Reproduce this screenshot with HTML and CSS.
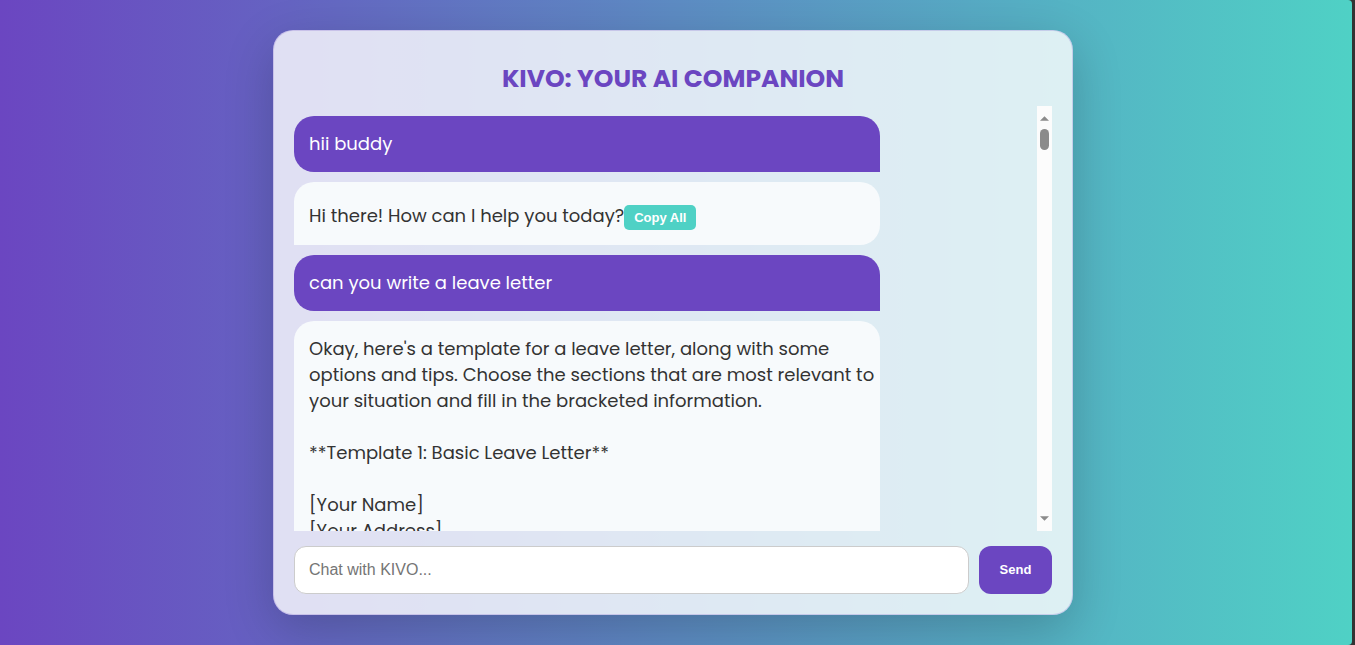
FILE: index.html
```html
<!DOCTYPE html>
<html lang="en">
<head>
<meta charset="utf-8">
<meta name="viewport" content="width=device-width, initial-scale=1">
<title>KIVO: Your AI Companion</title>
<link rel="stylesheet" href="styles.css">
</head>
<body class="page">
<main class="card">
  <h1 class="title">KIVO: YOUR AI COMPANION</h1>
  <div class="chat">
    <section class="messages" aria-label="Conversation">
      <div class="message user">hii buddy</div>
      <div class="message bot">Hi there! How can I help you today?<button class="copy" type="button">Copy All</button></div>
      <div class="message user">can you write a leave letter</div>
      <div class="message bot">Okay, here's a template for a leave letter, along with some options and tips. Choose the sections that are most relevant to your situation and fill in the bracketed information.

**Template 1: Basic Leave Letter**

[Your Name]
[Your Address]</div>
    </section>
    <div class="scrollbar" aria-hidden="true">
      <svg class="arrow" viewBox="0 0 10 5"><path d="M0 5 5 0 10 5z"/></svg>
      <span class="thumb"></span>
      <svg class="arrow down" viewBox="0 0 10 5"><path d="M0 0 5 5 10 0z"/></svg>
    </div>
  </div>
  <form class="composer">
    <input class="field" type="text" placeholder="Chat with KIVO..." aria-label="Chat with KIVO">
    <button class="send" type="button">Send</button>
  </form>
</main>
</body>
</html>
```

FILE: styles.css
```css
* { box-sizing: border-box; }

html { background: #333; }

.page {
  display: flex;
  justify-content: center;
  height: 100vh;
  margin: 0 3px 0 0;
  padding: 30px 6px 30px 0;
  border-radius: 0 4px 4px 0;
  background: linear-gradient(90deg, #6b46c1, #4fd1c5);
  font-family: Poppins, Inter, "Liberation Sans", sans-serif;
}

.card {
  display: flex;
  flex-direction: column;
  width: 100%;
  max-width: 800px;
  padding: 20px;
  border: 1px solid rgba(107, 70, 193, 0.2);
  border-radius: 20px;
  background: rgba(255, 255, 255, 0.8);
  box-shadow: 0 15px 50px rgba(0, 0, 0, 0.2);
}

.title {
  margin: 0 0 9px;
  padding-top: 10px;
  color: #6b46c1;
  font-size: 25px;
  font-weight: 700;
  line-height: 36px;
  text-align: center;
}

.chat {
  display: flex;
  flex: 1;
  min-height: 0;
}

.messages {
  flex: 1;
  padding-right: 10px;
  overflow-y: auto;
  scrollbar-width: none;
}

.message {
  width: 80%;
  margin: 10px 0;
  padding: 15px 5px 15px 15px;
  font-size: 18px;
  line-height: 26px;
  white-space: pre-wrap;
}

.user {
  border-radius: 20px 20px 0 20px;
  background: #6b46c1;
  color: #fff;
}

.bot {
  border-radius: 20px 20px 20px 0;
  background: #f7fafc;
  color: #333;
}

.copy {
  margin-top: 8px;
  padding: 5px 10px;
  border: 0;
  border-radius: 5px;
  background: #4fd1c5;
  color: #fff;
  font: bold 13px/15px "Liberation Sans", Arial, sans-serif;
}

.scrollbar {
  display: flex;
  flex-direction: column;
  align-items: center;
  width: 15px;
  padding: 10px 0;
  background: #fcfcfc;
}

.arrow {
  width: 9px;
  height: 5px;
  fill: #8b8b8b;
}

.down { margin-top: auto; }

.thumb {
  width: 9px;
  height: 21px;
  margin-top: 8px;
  border-radius: 5px;
  background: #8b8b8b;
}

.composer {
  display: flex;
  gap: 10px;
  margin: 15px 0 0;
}

.field {
  flex: 1;
  min-width: 0;
  height: 48px;
  padding: 0 14px;
  border: 1px solid #ccc;
  border-radius: 12px;
  background: #fff;
  font: 16px "Liberation Sans", Arial, sans-serif;
}

.field::placeholder { color: #757575; }

.send {
  width: 73px;
  padding: 0 0 2px;
  border: 0;
  border-radius: 12px;
  background: #6b46c1;
  color: #fff;
  font: bold 13px "Liberation Sans", Arial, sans-serif;
}
```
